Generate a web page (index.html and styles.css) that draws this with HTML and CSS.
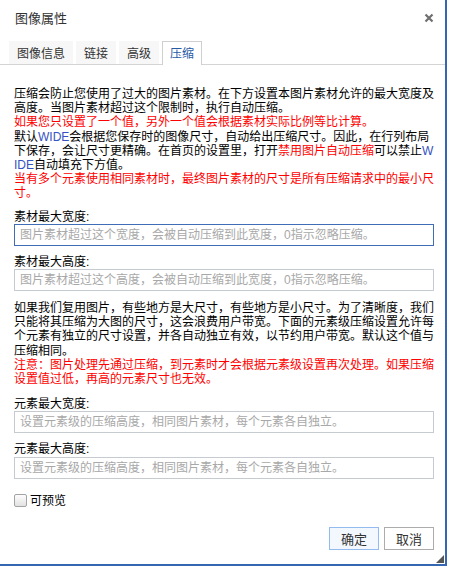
FILE: index.html
```html
<!DOCTYPE html>
<html lang="zh-CN">
<head>
    <meta charset="utf-8">
    <title>图像属性</title>
    <link rel="stylesheet" href="styles.css">
</head>
<body>
    <div class="dialog">
        <div class="dialog-title">
            <span>图像属性</span>
            <a class="close" title="关闭">
                <svg width="10" height="10" viewBox="0 0 10 10"><path d="M1.5 1.5 L8.5 8.5 M8.5 1.5 L1.5 8.5" stroke="#6f6f6f" stroke-width="2.2"/></svg>
            </a>
        </div>

        <div class="tabs">
            <span class="tab">图像信息</span>
            <span class="tab">链接</span>
            <span class="tab">高级</span>
            <span class="tab active">压缩</span>
        </div>

        <div class="content">
            <p class="note">压缩会防止您使用了过大的图片素材。在下方设置本图片素材允许的最大宽度及高度。当图片素材超过这个限制时，执行自动压缩。<br><span class="red">如果您只设置了一个值，另外一个值会根据素材实际比例等比计算。</span><br>默认<span class="blue">WIDE</span>会根据您保存时的图像尺寸，自动给出压缩尺寸。因此，在行列布局下保存，会让尺寸更精确。在首页的设置里，打开<span class="red">禁用图片自动压缩</span>可以禁止<span class="blue">WIDE</span>自动填充下方值。<br><span class="red">当有多个元素使用相同素材时，最终图片素材的尺寸是所有压缩请求中的最小尺寸。</span></p>

            <label class="field-label">素材最大宽度:</label>
            <input type="text" class="field focused" placeholder="图片素材超过这个宽度，会被自动压缩到此宽度，0指示忽略压缩。">

            <label class="field-label">素材最大高度:</label>
            <input type="text" class="field" placeholder="图片素材超过这个高度，会被自动压缩到此宽度，0指示忽略压缩。">

            <p class="note second">如果我们复用图片，有些地方是大尺寸，有些地方是小尺寸。为了清晰度，我们只能将其压缩为大图的尺寸，这会浪费用户带宽。下面的元素级压缩设置允许每个元素有独立的尺寸设置，并各自动独立有效，以节约用户带宽。默认这个值与压缩相同。<br><span class="red">注意：图片处理先通过压缩，到元素时才会根据元素级设置再次处理。如果压缩设置值过低，再高的元素尺寸也无效。</span></p>

            <label class="field-label wide-gap">元素最大宽度:</label>
            <input type="text" class="field" placeholder="设置元素级的压缩高度，相同图片素材，每个元素各自独立。">

            <label class="field-label">元素最大高度:</label>
            <input type="text" class="field" placeholder="设置元素级的压缩高度，相同图片素材，每个元素各自独立。">

            <label class="check-row"><input type="checkbox" class="check"> 可预览</label>
        </div>

        <div class="footer">
            <button class="btn primary">确定</button>
            <button class="btn">取消</button>
        </div>

        <span class="grip"></span>
    </div>
</body>
</html>
```

FILE: styles.css
```css
body {
    margin: 0;
    background: #fff;
    font-family: "Liberation Sans", "Noto Sans CJK SC", sans-serif;
    font-size: 12px;
    color: #000;
    text-spacing-trim: space-all;
    text-autospace: no-autospace;
}
.dialog {
    position: relative;
    width: 445px;
    height: 564px;
    background: #fff;
    border-right: 2px solid #3566b1;
    border-bottom: 2px solid #3566b1;
}
.dialog-title {
    height: 41px;
    display: flex;
    align-items: center;
    justify-content: space-between;
    padding: 0 10px 6px 15px;
    box-sizing: border-box;
    font-family: "Noto Sans CJK SC", sans-serif;
    font-size: 13px;
    color: #333;
}
.close {
    display: flex;
    margin-right: 1px;
    cursor: pointer;
}
.tabs {
    display: flex;
    gap: 3px;
    padding-left: 9px;
    height: 23px;
    border-bottom: 1px solid #d4d4d4;
    font-family: "Noto Sans CJK SC", sans-serif;
}
.tab {
    padding: 0 8px;
    line-height: 23px;
    background: #f7f7f7;
    color: #333;
    font-size: 12px;
}
.tab.active {
    background: #fff;
    color: #2a5aa6;
    padding: 0 7px;
    border: 1px solid #cfcfcf;
    border-bottom: none;
    line-height: 22px;
    height: 23px;
}
.content {
    padding: 22px 11px 0 14px;
}
.note {
    margin: 0;
    line-height: 14.2px;
    word-break: break-all;
}
.note.second {
    margin-top: 10px;
}
.red {
    color: #f00;
}
.blue {
    color: #3552c4;
}
.field-label {
    display: block;
    margin-top: 9px;
    line-height: 14.2px;
}
.field-label.wide-gap {
    margin-top: 11px;
}
.field {
    display: block;
    width: 100%;
    height: 22px;
    box-sizing: border-box;
    margin: 0;
    padding: 0 5px;
    border: 1px solid #c6cbd2;
    border-radius: 0;
    font-family: inherit;
    font-size: 12px;
    outline: none;
}
.field::placeholder {
    color: #a8a8a8;
}
.field.focused {
    border-color: #3f6db6;
}
.check-row {
    display: flex;
    align-items: center;
    gap: 3px;
    margin-top: 15px;
    line-height: 14px;
}
.check {
    appearance: none;
    width: 13px;
    height: 13px;
    margin: 0;
    border: 1px solid #a3a3a3;
    border-radius: 2px;
    background: linear-gradient(#fdfdfd, #e2e2e2);
}
.footer {
    display: flex;
    justify-content: flex-end;
    gap: 5px;
    padding-right: 11px;
    margin-top: 19px;
}
.btn {
    width: 50px;
    height: 23px;
    padding: 0;
    background: #fff;
    border: 1px solid #acacac;
    font-family: "Noto Sans CJK SC", sans-serif;
    font-size: 13px;
    color: #333;
}
.btn.primary {
    background: #f3f8ff;
    border-color: #94bbef;
}
.grip {
    position: absolute;
    right: 1px;
    bottom: 1px;
    width: 0;
    height: 0;
    border-left: 8px solid transparent;
    border-bottom: 8px solid #555;
}
```
